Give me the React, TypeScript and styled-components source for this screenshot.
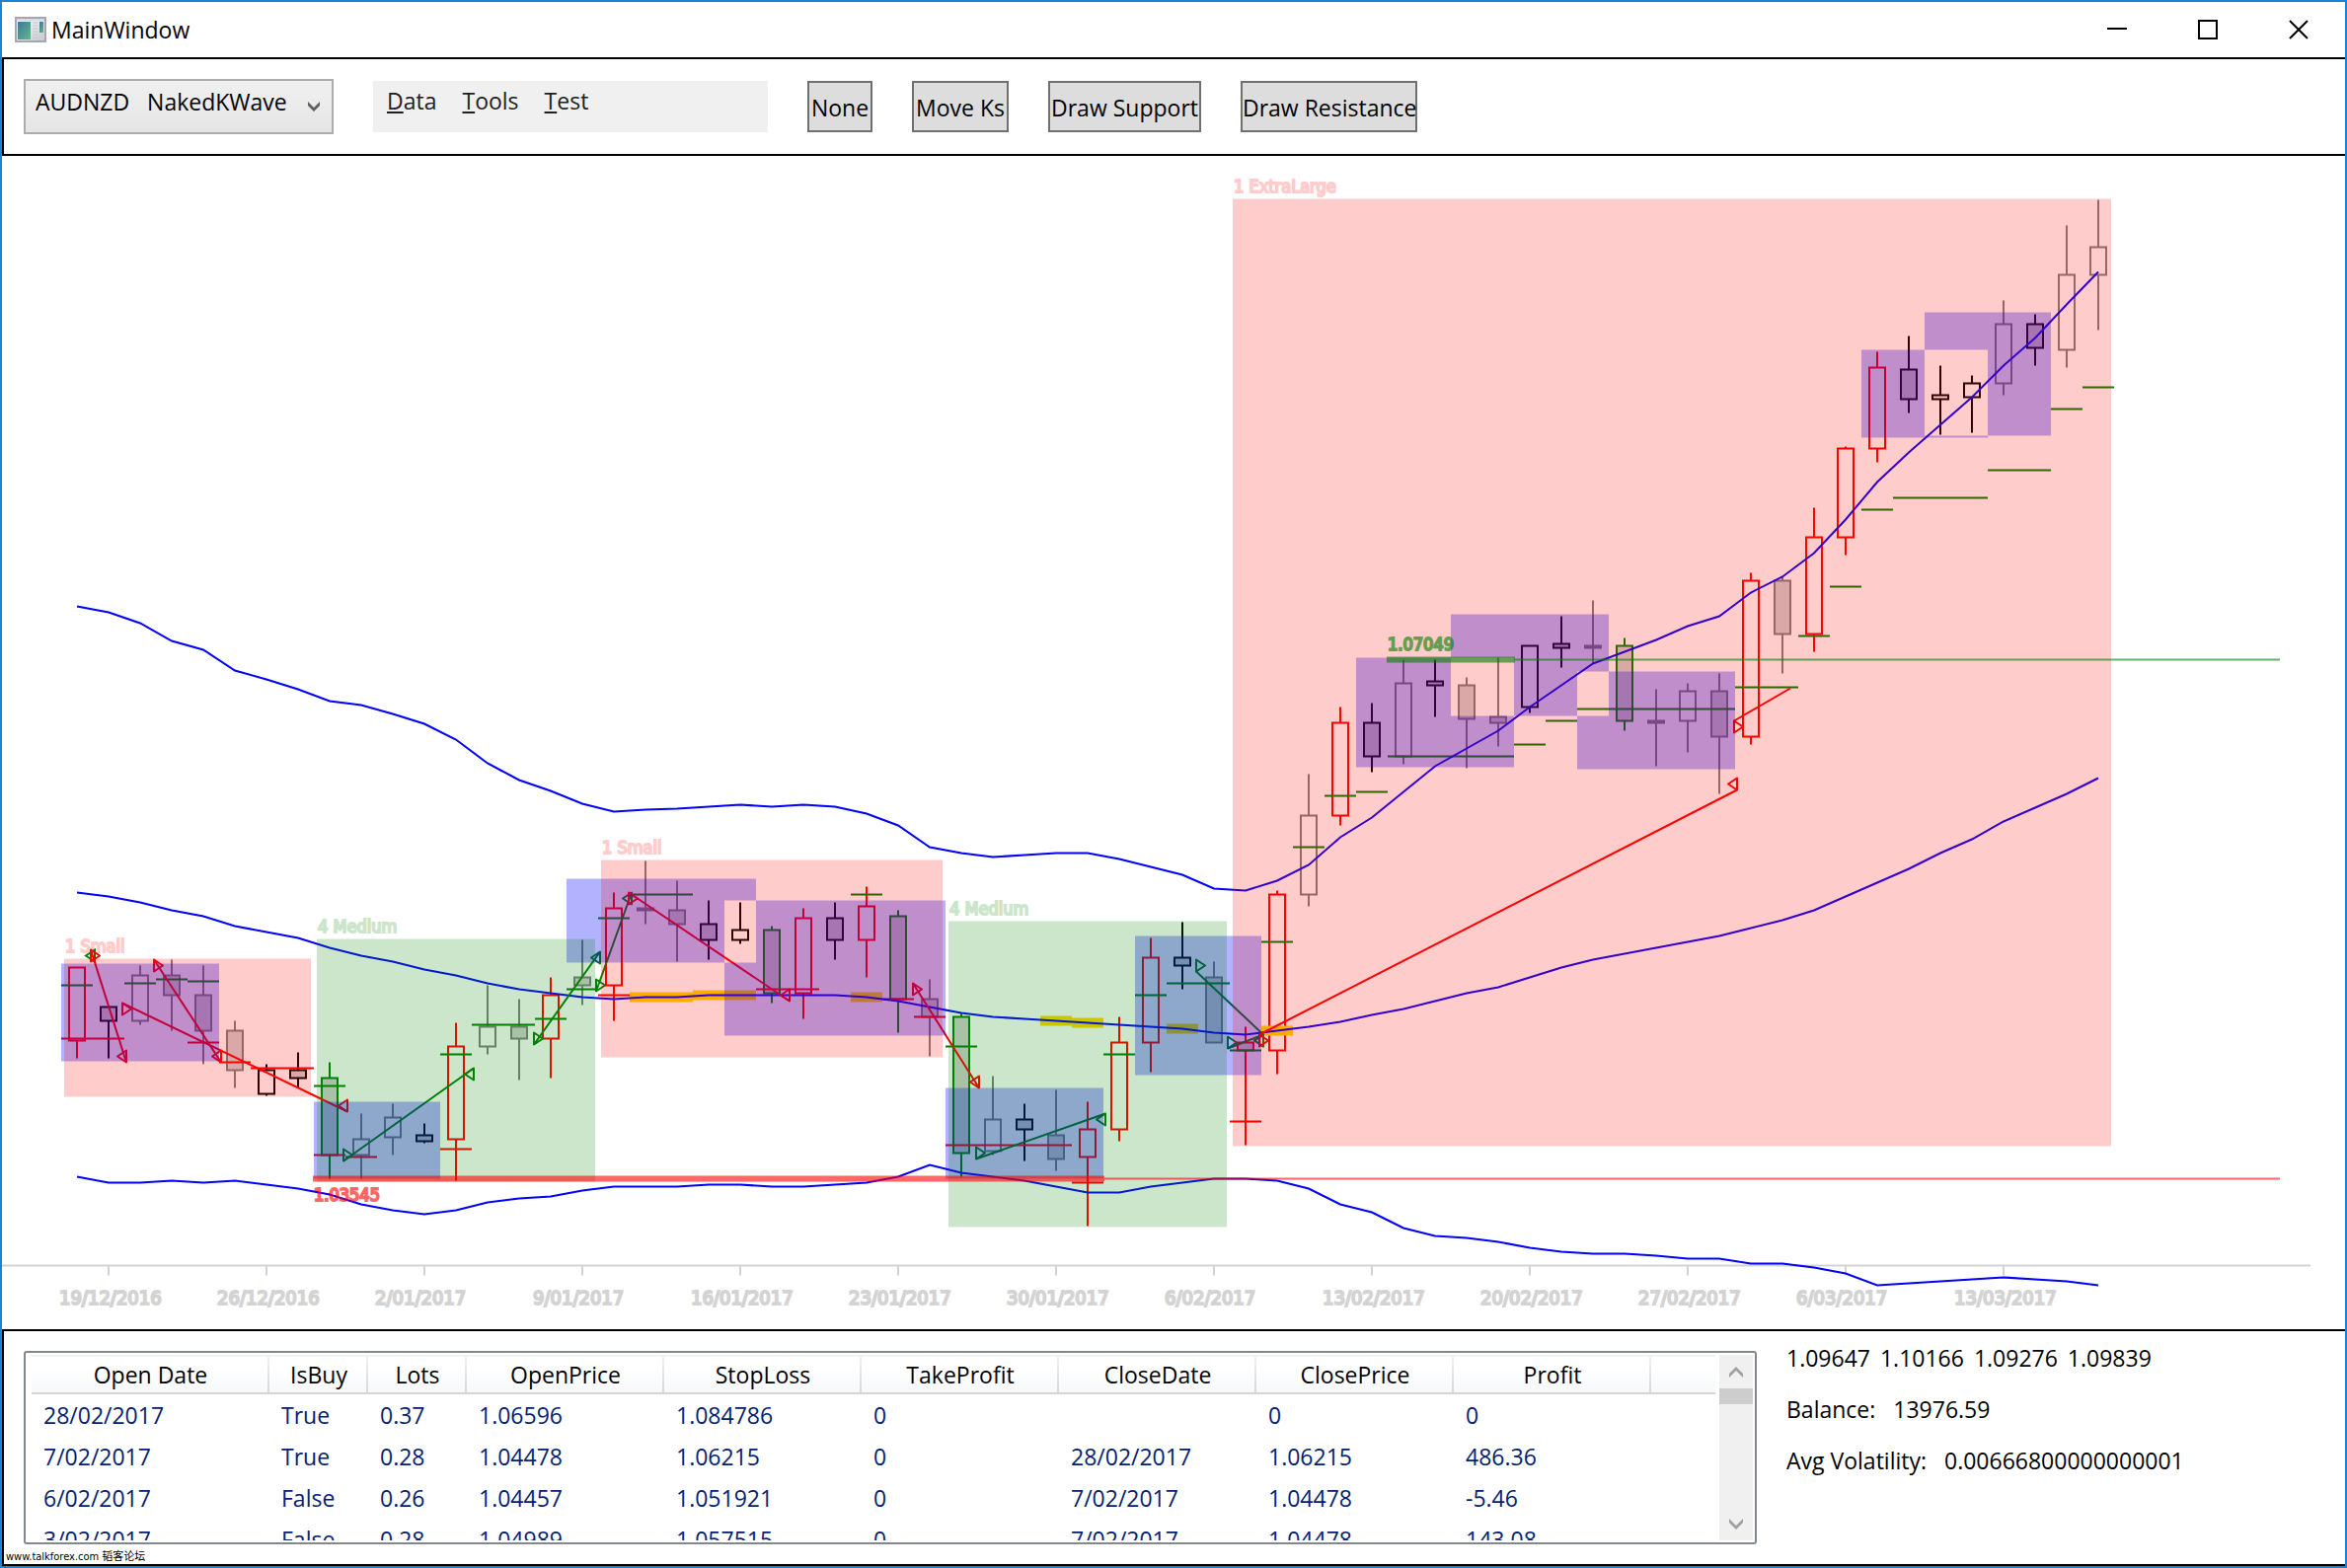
import React from "react";
import styled, { createGlobalStyle } from "styled-components";

const uiFont = `"Open Sans", "Noto Sans", "Noto Sans CJK SC", sans-serif`;
const chartFont = `"DejaVu Sans Condensed", "DejaVu Sans", sans-serif`;

const GlobalStyle = createGlobalStyle`
  *, *::before, *::after { box-sizing: border-box; }
  body { margin: 0; background: #fff; }
  button, select { font: inherit; color: inherit; margin: 0; }
`;

/* ---------- window frame ---------- */

const Window = styled.div`
  display: flex;
  flex-direction: column;
  min-height: 100vh;
  border: 2px solid #1883d7;
  background: #fff;
  color: #000;
  font-family: ${uiFont};
  font-size: 23px;
  line-height: 32px;
`;

const TitleBar = styled.header`
  display: flex;
  align-items: center;
  height: 56px;
  padding: 0 1px 0 13px;
`;

const Title = styled.h1`
  flex: 1;
  margin: 0 0 0 5px;
  font-size: 23px;
  font-weight: 400;
`;

const CaptionButton = styled.button`
  display: grid;
  place-items: center;
  width: 92px;
  height: 56px;
  padding: 0;
  border: 0;
  background: transparent;
`;

/* ---------- toolbar ---------- */

const Toolbar = styled.div`
  display: flex;
  align-items: center;
  gap: 40px;
  height: 100px;
  padding-left: 20px;
  border: 2px solid #000;
  border-right: 0;
`;

const ComboBox = styled.label`
  display: grid;
  grid-template-columns: 1fr 36px;
  align-items: center;
  width: 314px;
  height: 56px;
`;

const ComboSelect = styled.select`
  grid-area: 1 / 1 / 2 / 3;
  appearance: none;
  width: 100%;
  height: 56px;
  padding: 0 0 10px 10px;
  border: 2px solid #acacac;
  border-radius: 0;
  background: linear-gradient(#f0f0f0, #e5e5e5);
`;

const ComboArrow = styled.svg`
  grid-area: 1 / 2 / 2 / 3;
  justify-self: start;
  margin-left: 10px;
  pointer-events: none;
`;

const Menu = styled.nav`
  display: flex;
  align-items: flex-start;
  gap: 26px;
  width: 400px;
  height: 52px;
  padding: 4px 14px;
  background: #f0f0f0;
  color: #212121;
`;

const MenuItem = styled.button`
  padding: 0;
  border: 0;
  background: transparent;
  line-height: 32px;

  u {
    text-decoration-thickness: 2px;
    text-underline-offset: 2px;
  }
`;

const ToolButton = styled.button<{ $width: number }>`
  width: ${(p) => p.$width}px;
  height: 52px;
  padding: 2px 0 0;
  border: 2px solid #707070;
  background: #ddd;
  white-space: nowrap;
`;

/* ---------- chart ---------- */

const Chart = styled.svg`
  display: block;
  width: 100%;
  height: auto;
  font-family: ${chartFont};
`;

const DateLabel = styled.text`
  fill: #d3d3d3;
  stroke: #d3d3d3;
  stroke-width: 2px;
  font-size: 20px;
`;

const ZoneLabel = styled.text<{ $color: string; $opacity: number }>`
  fill: ${(p) => p.$color};
  stroke: ${(p) => p.$color};
  stroke-width: 2px;
  opacity: ${(p) => p.$opacity};
  font-size: 18px;
`;

/* ---------- bottom panel ---------- */

const BottomPanel = styled.section`
  flex: 1;
  display: flex;
  flex-direction: column;
  border: 2px solid #000;
  border-right: 0;
`;

const BottomRow = styled.div`
  display: flex;
  align-items: flex-start;
  gap: 30px;
  padding-left: 20px;
`;

const ListView = styled.div`
  display: flex;
  flex: 0 1 1756px;
  min-width: 0;
  height: 196px;
  margin-top: 20px;
  padding: 2px;
  border: 2px solid #828790;
  border-radius: 3px;
`;

const ListContent = styled.div`
  flex: 1;
  min-width: 0;
  padding: 0 4px;
  overflow: hidden;
`;

const Trades = styled.table`
  width: 100%;
  table-layout: fixed;
  border-collapse: separate;
  border-spacing: 0;
`;

const HeadCell = styled.th`
  height: 40px;
  padding: 0;
  border-top: 2px solid #f1f1f1;
  border-bottom: 2px solid #d5d5d5;
  background:
    linear-gradient(#f1f1f1, #d8d8d8) right / 2px 100% no-repeat,
    linear-gradient(#fff 30%, #f7f8fa);
  font-weight: 400;
  line-height: 36px;
  text-align: center;

  &:last-child {
    background: linear-gradient(#fff 30%, #f7f8fa);
  }
`;

const Cell = styled.td`
  height: 42px;
  padding: 0 0 0 12px;
  color: #042271;
  line-height: 42px;
  white-space: nowrap;
`;

const ScrollBar = styled.div`
  display: flex;
  flex-direction: column;
  width: 34px;
  background: #f0f0f0;
`;

const ScrollButton = styled.button`
  display: grid;
  place-items: center;
  height: 34px;
  padding: 0;
  border: 0;
  background: transparent;
`;

const ScrollTrack = styled.div`
  flex: 1;
`;

const ScrollThumb = styled.div`
  height: 16px;
  background: #cdcdcd;
`;

const Account = styled.div`
  padding-top: 1px;
  line-height: 52px;
  white-space: nowrap;
`;

const AccountLine = styled.div<{ $gap: number }>`
  display: flex;
  gap: ${(p) => p.$gap}px;
`;

const Watermark = styled.footer`
  display: flex;
  flex: 1;
  align-items: flex-end;
  min-height: 20px;
  padding-left: 2px;
  font-family: "DejaVu Sans Condensed", "DejaVu Sans", "Noto Sans CJK SC", sans-serif;
  font-size: 11px;
  font-weight: 400;
  line-height: 14px;
`;

/* ---------- chart data ---------- */

const barX = (i: number) => 78 + 32 * i;

const RED = "#ff0000";
const GREEN = "#008000";
const tones: Record<string, string> = { r: RED, g: GREEN, k: "#000000", y: "#808080" };

/* body top, body bottom, high, low, tone, filled */
type Bar = [number, number, number, number, string, number];

const bars: Bar[] = [
  [980, 1054, 980, 1072, "r", 0],
  [1020, 1034, 1020, 1072, "k", 1],
  [988, 1034, 978, 1038, "y", 0],
  [988, 1008, 972, 1044, "y", 1],
  [1008, 1044, 978, 1078, "y", 1],
  [1044, 1084, 1034, 1102, "y", 1],
  [1084, 1108, 1078, 1110, "k", 0],
  [1084, 1092, 1066, 1102, "k", 1],
  [1092, 1170, 1076, 1194, "g", 1],
  [1154, 1170, 1128, 1194, "y", 0],
  [1132, 1152, 1118, 1170, "y", 0],
  [1150, 1156, 1138, 1158, "k", 1],
  [1060, 1154, 1036, 1196, "r", 0],
  [1040, 1060, 998, 1068, "y", 0],
  [1040, 1052, 1012, 1094, "y", 1],
  [1008, 1052, 990, 1092, "r", 0],
  [990, 998, 952, 1018, "y", 1],
  [920, 998, 904, 1034, "r", 0],
  [920, 922, 872, 936, "y", 1],
  [922, 936, 892, 974, "y", 1],
  [936, 952, 912, 972, "k", 1],
  [942, 952, 914, 956, "k", 0],
  [942, 1006, 938, 1016, "g", 1],
  [930, 1006, 920, 1032, "r", 0],
  [930, 952, 914, 972, "k", 1],
  [918, 952, 898, 990, "r", 0],
  [928, 1012, 922, 1046, "g", 1],
  [1012, 1030, 992, 1070, "y", 1],
  [1030, 1168, 1026, 1192, "g", 1],
  [1134, 1166, 1090, 1170, "y", 0],
  [1134, 1144, 1118, 1176, "k", 1],
  [1150, 1174, 1104, 1186, "y", 1],
  [1144, 1172, 1116, 1242, "r", 0],
  [1056, 1144, 1030, 1156, "r", 0],
  [970, 1056, 950, 1086, "r", 0],
  [970, 978, 934, 1002, "k", 1],
  [990, 1056, 974, 1056, "y", 1],
  [1056, 1064, 1040, 1160, "r", 1],
  [906, 1064, 902, 1088, "r", 0],
  [826, 906, 784, 918, "y", 0],
  [732, 826, 716, 836, "r", 0],
  [732, 766, 712, 782, "k", 1],
  [692, 766, 668, 774, "y", 0],
  [690, 694, 668, 726, "k", 1],
  [694, 728, 686, 778, "y", 1],
  [726, 732, 666, 756, "y", 1],
  [654, 716, 654, 722, "k", 0],
  [652, 656, 624, 676, "k", 1],
  [654, 656, 608, 672, "y", 1],
  [654, 730, 646, 740, "g", 1],
  [730, 732, 698, 776, "y", 1],
  [700, 730, 692, 762, "y", 0],
  [700, 746, 682, 804, "y", 1],
  [588, 746, 580, 754, "r", 0],
  [588, 642, 584, 682, "y", 1],
  [544, 642, 514, 660, "r", 0],
  [454, 544, 452, 562, "r", 0],
  [372, 454, 356, 468, "r", 0],
  [374, 404, 340, 418, "k", 1],
  [400, 404, 370, 440, "k", 0],
  [388, 402, 380, 438, "k", 0],
  [328, 388, 304, 400, "y", 0],
  [328, 352, 318, 370, "k", 1],
  [278, 354, 228, 372, "y", 0],
  [250, 278, 202, 334, "y", 0],
];

/* the three Bollinger curves, one value for each bar */
const upperBand = [
  614, 620, 631, 649, 658, 679, 688, 698, 710, 714, 723, 733, 749, 773, 790, 801, 814, 822, 820,
  819, 817, 815, 817, 815, 817, 824, 836, 858, 864, 868, 866, 864, 864, 870, 878, 886, 900, 902,
  892, 876, 848, 828, 802, 776, 758, 740, 716, 694, 672, 660, 648, 634, 624, 600, 584, 560, 526,
  488, 458, 430, 402, 370, 342, 308, 275,
];
const middleBand = [
  904, 908, 914, 922, 928, 938, 944, 950, 960, 968, 974, 982, 988, 996, 1002, 1006, 1010, 1012,
  1010, 1010, 1008, 1008, 1008, 1008, 1008, 1010, 1014, 1020, 1026, 1030, 1032, 1034, 1036, 1038,
  1040, 1042, 1046, 1048, 1044, 1040, 1035, 1028, 1022, 1014, 1006, 1000, 990, 980, 972, 966, 960,
  954, 948, 940, 932, 922, 908, 894, 880, 864, 850, 832, 818, 804, 788,
];
const lowerBand = [
  1192, 1198, 1198, 1196, 1198, 1196, 1200, 1204, 1210, 1220, 1226, 1230, 1226, 1218, 1214, 1212,
  1206, 1202, 1202, 1202, 1200, 1200, 1202, 1202, 1200, 1198, 1192, 1180, 1188, 1192, 1196, 1202,
  1208, 1208, 1202, 1198, 1194, 1194, 1196, 1204, 1220, 1228, 1244, 1252, 1254, 1258, 1264, 1268,
  1270, 1270, 1272, 1275, 1275, 1280, 1280, 1284, 1290, 1302, 1300, 1298, 1296, 1294, 1296, 1298,
  1302,
];

/* first bar, last bar, level */
type Level = [number, number, number];

const greenLevels: Level[] = [
  [0, 0, 998], [2, 2, 996], [3, 3, 992], [4, 4, 994], [8, 8, 1100], [12, 12, 1068],
  [13, 14, 1038], [15, 15, 1032], [16, 16, 1002], [17, 17, 930], [18, 19, 906], [25, 25, 906],
  [28, 28, 1060], [33, 33, 1068], [34, 34, 1008], [35, 36, 996], [37, 37, 1064], [38, 38, 954],
  [39, 39, 858], [40, 40, 806], [41, 41, 802], [42, 45, 766], [46, 46, 754], [47, 47, 730],
  [48, 52, 718], [53, 54, 696], [55, 55, 644], [56, 56, 594], [57, 57, 516], [58, 60, 504],
  [61, 62, 476], [63, 63, 414], [64, 64, 392],
];
const redLevels: Level[] = [
  [0, 1, 1052], [4, 4, 1056], [5, 5, 1076], [6, 7, 1082], [8, 8, 1170], [9, 9, 1172],
  [12, 12, 1164], [17, 17, 1008], [22, 23, 1002], [26, 26, 1012], [27, 27, 1030],
  [28, 31, 1160], [32, 32, 1198], [37, 37, 1136],
];
const goldLevels: Level[] = [
  [18, 19, 1010], [20, 21, 1008], [25, 25, 1010], [31, 31, 1034], [32, 32, 1036],
  [35, 35, 1042], [38, 38, 1044],
];

/* entry base x, entry y, exit base x, exit y */
type Trade = { tone: string; from: [number, number]; to: [number, number]; noExit?: boolean };

const trades: Trade[] = [
  { tone: RED, from: [92, 968], to: [128, 1070] },
  { tone: RED, from: [124, 1022], to: [352, 1120] },
  { tone: RED, from: [156, 978], to: [224, 1070] },
  { tone: GREEN, from: [348, 1170], to: [480, 1088] },
  { tone: GREEN, from: [541, 1052], to: [608, 970] },
  { tone: GREEN, from: [604, 998], to: [640, 910] },
  { tone: RED, from: [637, 910], to: [800, 1008] },
  { tone: RED, from: [925, 1002], to: [992, 1096] },
  { tone: GREEN, from: [989, 1168], to: [1120, 1134] },
  { tone: GREEN, from: [1212, 978], to: [1280, 1054] },
  { tone: GREEN, from: [1244, 1056], to: [1280, 1054] },
  { tone: RED, from: [1276, 1054], to: [1760, 794] },
  { tone: RED, from: [1757, 736], to: [1814, 697], noExit: true },
];

type Box = [number, number, number, number];

const overlaps: Box[] = [
  [62, 976, 222, 1075],
  [318, 1116, 446, 1194],
  [574, 890, 766, 975],
  [734, 912, 958, 1049],
  [958, 1102, 1118, 1194],
  [1150, 948, 1278, 1089],
  [1374, 666, 1534, 777],
  [1470, 622, 1630, 725],
  [1598, 680, 1758, 779],
  [1886, 354, 2014, 443],
  [1950, 316, 2078, 441],
];

const zones: { tone: string; label: string; box: Box }[] = [
  { tone: RED, label: "1 Small", box: [65, 971, 315, 1111] },
  { tone: GREEN, label: "4 Medium", box: [321, 951, 603, 1197] },
  { tone: RED, label: "1 Small", box: [609, 871, 955, 1071] },
  { tone: GREEN, label: "4 Medium", box: [961, 933, 1243, 1243] },
  { tone: RED, label: "1 ExtraLarge", box: [1249, 201, 2139, 1161] },
];

const dates = [
  "19/12/2016", "26/12/2016", "2/01/2017", "9/01/2017", "16/01/2017", "23/01/2017",
  "30/01/2017", "6/02/2017", "13/02/2017", "20/02/2017", "27/02/2017", "6/03/2017",
  "13/03/2017",
];

const toPoints = (ys: number[]) => ys.map((y, i) => `${barX(i)},${y}`).join(" ");

function Candle({ i, bar }: { i: number; bar: Bar }) {
  const [top, bottom, high, low, tone, filled] = bar;
  const x = barX(i);
  return (
    <g stroke={tones[tone]} strokeWidth={2} fill={filled ? "#d3d3d3" : "none"}>
      <path d={`M${x} ${high}V${top}M${x} ${bottom}V${low}`} />
      <rect x={x - 8} y={top} width={16} height={bottom - top} />
    </g>
  );
}

function Levels({ levels, tone, width }: { levels: Level[]; tone: string; width: number }) {
  const d = levels.map(([a, b, y]) => `M${barX(a) - 16} ${y}H${barX(b) + 16}`).join("");
  return <path d={d} stroke={tone} strokeWidth={width} fill="none" />;
}

function TradeMark({ tone, from, to, noExit }: Trade) {
  const [x1, y1] = from;
  const [x2, y2] = to;
  const half = tone === RED ? -6 : 6;
  return (
    <g stroke={tone} strokeWidth={2} fill="none" strokeLinejoin="round">
      <path d={`M${x1} ${y1 - 6}L${x1 + 9} ${y1}L${x1} ${y1 + 6}Z`} />
      {!noExit && <path d={`M${x2} ${y2 - 6}L${x2 - 9} ${y2}L${x2} ${y2 + 6}Z`} />}
      <line x1={x1} y1={y1 + half} x2={x2} y2={noExit ? y2 : y2 - half} />
    </g>
  );
}

function PriceChart() {
  return (
    <Chart viewBox="2 158 2374 1189" role="img" aria-label="AUDNZD price chart">
      {dates.map((d, k) => (
        <DateLabel key={d} x={60 + 160 * k} y={1322}>
          {d}
        </DateLabel>
      ))}

      <g transform="translate(0 0.5)">
        <g stroke="#d3d3d3" strokeWidth={2}>
          <line x1={2} y1={1282} x2={2341} y2={1282} />
          {dates.map((d, k) => (
            <line key={d} x1={110 + 160 * k} y1={1282} x2={110 + 160 * k} y2={1292} />
          ))}
        </g>
        {bars.map((bar, i) => (
          <Candle key={i} i={i} bar={bar} />
        ))}
        <Levels levels={goldLevels} tone="#ffd700" width={10} />
        <Levels levels={greenLevels} tone={GREEN} width={2} />
        <Levels levels={redLevels} tone={RED} width={2} />
        <g stroke="#0000ff" strokeWidth={2} fill="none">
          <polyline points={toPoints(upperBand)} />
          <polyline points={toPoints(middleBand)} />
          <polyline points={toPoints(lowerBand)} />
        </g>
        <path d="M96 962L87 968L96 974Z" stroke={GREEN} strokeWidth={2} fill="none" />
        {trades.map((t, i) => (
          <TradeMark key={i} {...t} />
        ))}

        <path
          d={overlaps.map(([a, b, c, d]) => `M${a} ${b}H${c}V${d}H${a}Z`).join("")}
          fill="#0000ff"
          fillOpacity={0.3}
          fillRule="evenodd"
        />
        {zones.map(({ tone, box: [a, b, c, d] }) => (
          <rect key={a} x={a} y={b} width={c - a} height={d - b} fill={tone} fillOpacity={0.2} />
        ))}

        <g stroke={RED} strokeOpacity={0.6}>
          <line x1={317} y1={1194} x2={1119} y2={1194} strokeWidth={6} />
          <line x1={1119} y1={1194} x2={2310} y2={1194} strokeWidth={2} />
        </g>
        <g stroke={GREEN} strokeOpacity={0.6}>
          <line x1={1405} y1={668} x2={1535} y2={668} strokeWidth={6} />
          <line x1={1535} y1={668} x2={2310} y2={668} strokeWidth={2} />
        </g>
      </g>

      {zones.map(({ tone, label, box: [a, b] }) => (
        <ZoneLabel key={a} x={a + 1} y={b - 6} $color={tone} $opacity={0.2}>
          {label}
        </ZoneLabel>
      ))}
      <ZoneLabel x={318} y={1217} $color={RED} $opacity={0.6}>
        1.03545
      </ZoneLabel>
      <ZoneLabel x={1406} y={659} $color={GREEN} $opacity={0.6}>
        1.07049
      </ZoneLabel>
    </Chart>
  );
}

/* ---------- icons ---------- */

function AppIcon() {
  return (
    <svg width={32} height={26} viewBox="0 0 32 26" aria-hidden="true">
      <defs>
        <linearGradient id="pane" x1="0" y1="0" x2="1" y2="1">
          <stop offset="0" stopColor="#3f78a6" />
          <stop offset="0.5" stopColor="#4b9a92" />
          <stop offset="1" stopColor="#63b984" />
        </linearGradient>
        <linearGradient id="frame" x1="0" y1="0" x2="1" y2="1">
          <stop offset="0" stopColor="#fdfdfd" />
          <stop offset="1" stopColor="#c8c8cc" />
        </linearGradient>
      </defs>
      <rect x="1" y="1" width="30" height="24" fill="url(#frame)" stroke="#a3a7b2" strokeWidth="2" />
      <rect x="2" y="2" width="28" height="2" fill="#d5dbe6" />
      <rect x="3" y="5" width="13" height="18" fill="url(#pane)" />
      <path d="M18 6h5M18 9h5M18 12h5M18 15h5M18 18h5M18 21h5" stroke="#c3c6cb" strokeWidth="1" />
      <rect x="25" y="5" width="4" height="11" fill="url(#pane)" />
    </svg>
  );
}

function ScrollArrow({ down }: { down?: boolean }) {
  return (
    <svg width={14} height={11} viewBox="0 0 14 11" aria-hidden="true">
      <path
        d={down ? "M0 0L7 7L14 0V4L7 11L0 4Z" : "M0 11L7 4L14 11V7L7 0L0 7Z"}
        fill="#a0a0a0"
      />
    </svg>
  );
}

/* ---------- trades table ---------- */

const columns = [
  "Open Date", "IsBuy", "Lots", "OpenPrice", "StopLoss", "TakeProfit", "CloseDate",
  "ClosePrice", "Profit", "",
];
const columnWidths = [241, 100, 100, 200, 200, 200, 200, 200, 200];

const rows = [
  ["28/02/2017", "True", "0.37", "1.06596", "1.084786", "0", "", "0", "0", ""],
  ["7/02/2017", "True", "0.28", "1.04478", "1.06215", "0", "28/02/2017", "1.06215", "486.36", ""],
  ["6/02/2017", "False", "0.26", "1.04457", "1.051921", "0", "7/02/2017", "1.04478", "-5.46", ""],
  ["3/02/2017", "False", "0.28", "1.04989", "1.057515", "0", "7/02/2017", "1.04478", "143.08", ""],
];

const tools = [
  { label: "None", width: 66 },
  { label: "Move Ks", width: 98 },
  { label: "Draw Support", width: 155 },
  { label: "Draw Resistance", width: 179 },
];

export default function App() {
  return (
    <Window>
      <GlobalStyle />
      <TitleBar>
        <AppIcon />
        <Title>MainWindow</Title>
        <CaptionButton aria-label="Minimize">
          <svg width={20} height={20} viewBox="0 0 20 20">
            <path d="M0 9H20" stroke="#000" strokeWidth="2" />
          </svg>
        </CaptionButton>
        <CaptionButton aria-label="Maximize">
          <svg width={20} height={20} viewBox="0 0 20 20">
            <rect x="1" y="1" width="18" height="18" fill="none" stroke="#000" strokeWidth="2" />
          </svg>
        </CaptionButton>
        <CaptionButton aria-label="Close">
          <svg width={20} height={20} viewBox="0 0 20 20">
            <path d="M1 1L19 19M19 1L1 19" stroke="#000" strokeWidth="2" />
          </svg>
        </CaptionButton>
      </TitleBar>

      <Toolbar>
        <ComboBox>
          <ComboSelect aria-label="Chart" defaultValue="AUDNZD">
            <option value="AUDNZD">{"AUDNZD\u00a0\u00a0\u00a0NakedKWave"}</option>
          </ComboSelect>
          <ComboArrow width={12} height={10} viewBox="0 0 12 10" aria-hidden="true">
            <path d="M0 0L6 6L12 0V4L6 10L0 4Z" fill="#606060" />
          </ComboArrow>
        </ComboBox>
        <Menu>
          <MenuItem><u>D</u>ata</MenuItem>
          <MenuItem><u>T</u>ools</MenuItem>
          <MenuItem><u>T</u>est</MenuItem>
        </Menu>
        {tools.map((t) => (
          <ToolButton key={t.label} $width={t.width}>
            {t.label}
          </ToolButton>
        ))}
      </Toolbar>

      <PriceChart />

      <BottomPanel>
        <BottomRow>
          <ListView>
            <ListContent>
              <Trades>
                <colgroup>
                  {columnWidths.map((w, i) => (
                    <col key={i} width={w} />
                  ))}
                  <col />
                </colgroup>
                <thead>
                  <tr>
                    {columns.map((c) => (
                      <HeadCell key={c}>{c}</HeadCell>
                    ))}
                  </tr>
                </thead>
                <tbody>
                  {rows.map((row) => (
                    <tr key={row[0]}>
                      {row.map((value, i) => (
                        <Cell key={i}>{value}</Cell>
                      ))}
                    </tr>
                  ))}
                </tbody>
              </Trades>
            </ListContent>
            <ScrollBar>
              <ScrollButton aria-label="Scroll up">
                <ScrollArrow />
              </ScrollButton>
              <ScrollTrack>
                <ScrollThumb />
              </ScrollTrack>
              <ScrollButton aria-label="Scroll down">
                <ScrollArrow down />
              </ScrollButton>
            </ScrollBar>
          </ListView>
          <Account>
            <AccountLine $gap={10}>
              <span>1.09647</span>
              <span>1.10166</span>
              <span>1.09276</span>
              <span>1.09839</span>
            </AccountLine>
            <AccountLine $gap={18}>
              <span>Balance:</span>
              <span>13976.59</span>
            </AccountLine>
            <AccountLine $gap={18}>
              <span>Avg Volatility:</span>
              <span>0.00666800000000001</span>
            </AccountLine>
          </Account>
        </BottomRow>
        <Watermark>www.talkforex.com 韬客论坛</Watermark>
      </BottomPanel>
    </Window>
  );
}
